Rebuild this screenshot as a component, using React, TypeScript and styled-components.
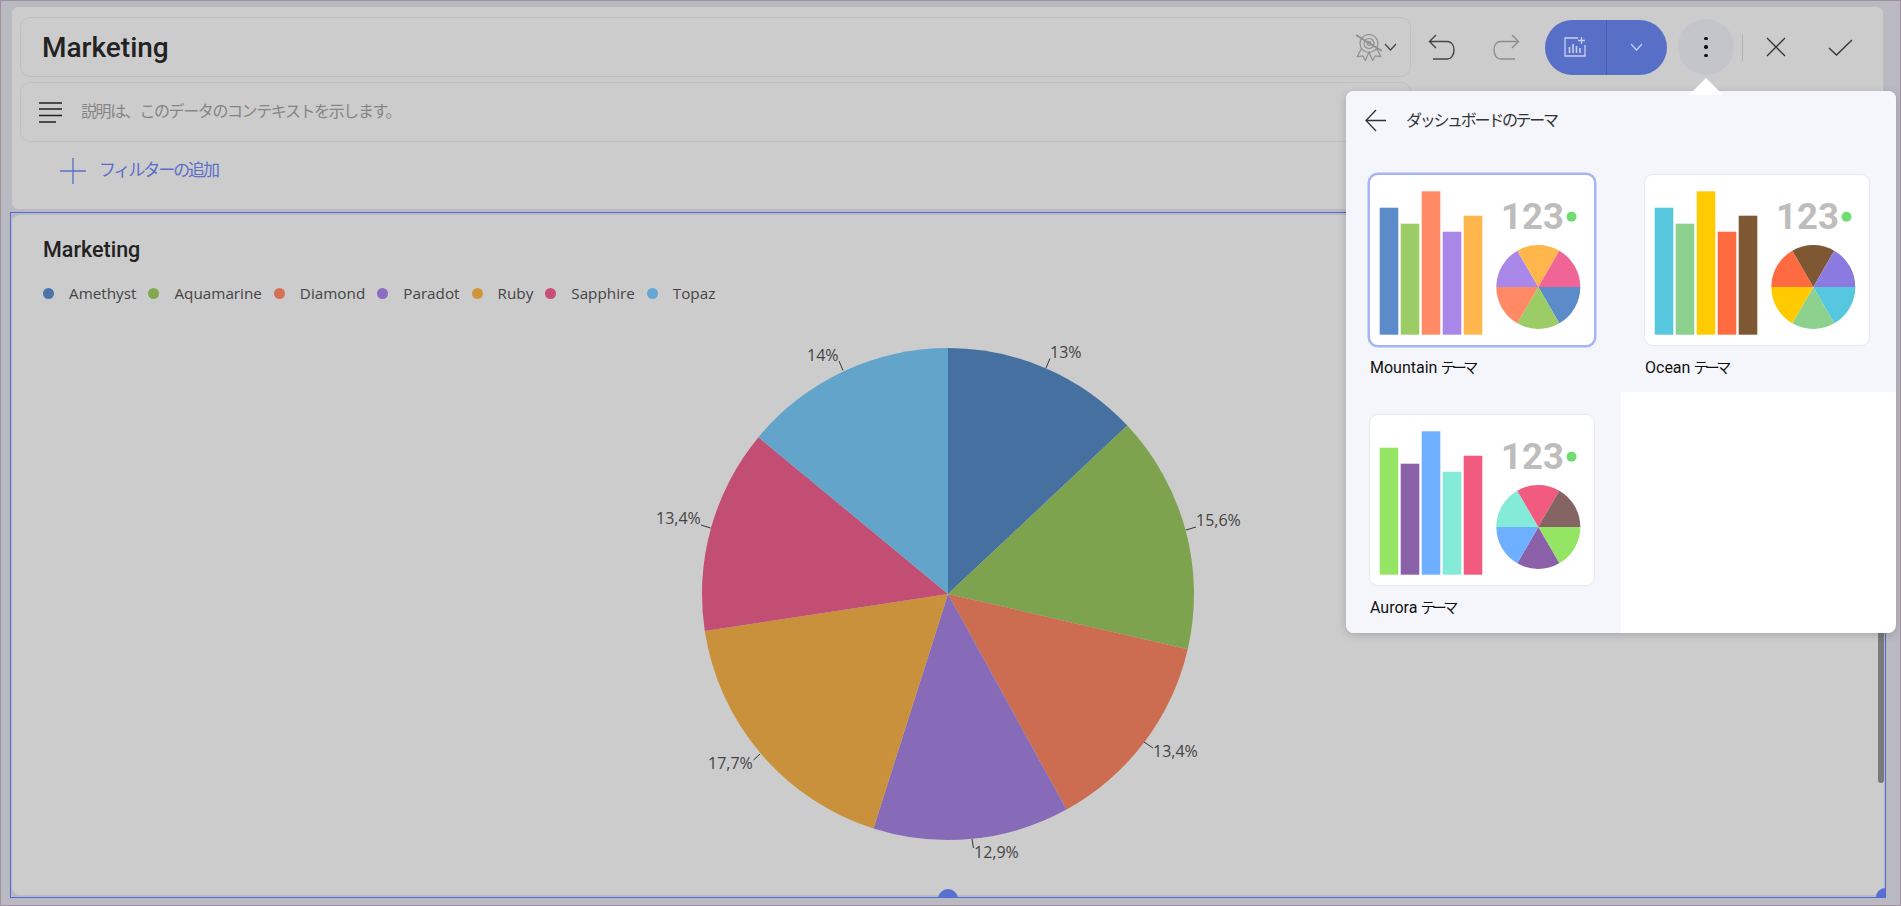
import React from "react";
import styled, { createGlobalStyle } from "styled-components";

const GlobalStyle = createGlobalStyle`
  html, body {
    margin: 0;
    padding: 0;
    background: #b9bac1;
    font-family: Roboto, "Noto Sans CJK JP", sans-serif;
  }
`;

const jpFont = `"Noto Sans CJK JP", Roboto, sans-serif`;

const Page = styled.div`
  position: relative;
  box-sizing: border-box;
  width: 1901px;
  height: 906px;
  overflow: hidden;
  border: 1px solid #a08f9f;
  background: #b9bac1;
  padding: 6px 14px 7px 9px;
`;

const HeaderPanel = styled.div`
  display: flex;
  box-sizing: border-box;
  height: 202px;
  margin: 0 3px 3px 2px;
  padding: 10px 0 0 8px;
  background: #cccccc;
  border-radius: 6px;
`;

const HeaderFields = styled.div`
  display: flex;
  flex-direction: column;
  gap: 5px;
  width: 1391px;
`;

const FieldBox = styled.div`
  display: flex;
  align-items: center;
  box-sizing: border-box;
  height: 60px;
  border: 1px solid #c0c0c0;
  border-radius: 10px;
`;

const TitleBox = styled(FieldBox)`
  padding: 0 13px 0 21px;
  justify-content: space-between;
`;

const TitleText = styled.div`
  font-size: 28px;
  font-weight: 500;
  color: #222222;
`;

const AwardGroup = styled.div`
  display: flex;
  align-items: center;
  gap: 2px;
`;

const DescriptionBox = styled(FieldBox)`
  padding-left: 18px;
  gap: 19px;
`;

const DescriptionText = styled.div`
  margin-bottom: 4px;
  font-family: ${jpFont};
  font-size: 16px;
  font-weight: 400;
  letter-spacing: -1.4px;
  color: #858585;
`;

const FilterRow = styled.div`
  display: flex;
  align-items: center;
  gap: 13px;
  margin-top: 9px;
  padding-left: 40px;
`;

const FilterText = styled.div`
  margin-bottom: 4px;
  font-family: ${jpFont};
  font-size: 17px;
  font-weight: 400;
  letter-spacing: -2.1px;
  color: #5b6fc9;
`;

const Toolbar = styled.div`
  display: flex;
  align-items: center;
  height: 56px;
  margin: 2px 0 0 3px;
`;

const IconButton = styled.div<{ $after?: number }>`
  display: flex;
  align-items: center;
  justify-content: center;
  flex: none;
  width: 56px;
  height: 56px;
  margin-right: ${(p) => p.$after ?? 8}px;
`;

const SplitButton = styled.div`
  display: flex;
  flex: none;
  box-sizing: border-box;
  width: 122px;
  height: 55px;
  margin-right: 11px;
  border-radius: 28px;
  background: #586fc7;
`;

const SplitPart = styled.div<{ $width: number }>`
  display: flex;
  align-items: center;
  justify-content: center;
  width: ${(p) => p.$width}px;
  & + & {
    border-left: 1px solid #4a5ea8;
  }
`;

const MoreButton = styled.div`
  display: flex;
  flex-direction: column;
  align-items: center;
  justify-content: center;
  gap: 5px;
  flex: none;
  width: 56px;
  height: 56px;
  margin-right: 8px;
  border-radius: 50%;
  background: #c4c5cb;
`;

const MoreDot = styled.span`
  width: 3.5px;
  height: 3.5px;
  border-radius: 50%;
  background: #111111;
`;

const ToolbarDivider = styled.div`
  flex: none;
  width: 1px;
  height: 27px;
  margin-right: 5px;
  background: #b4b4b4;
`;

const ChartFrame = styled.div`
  position: relative;
  box-sizing: border-box;
  height: 686px;
  padding: 2px 1px 2px 1px;
  border: 1px solid #5269d8;
`;

const ChartCard = styled.div`
  position: relative;
  box-sizing: border-box;
  height: 100%;
  padding: 23px 0 0 31px;
  background: #cccccc;
  border-radius: 8px;
  overflow: hidden;
`;

const ChartTitle = styled.div`
  font-size: 21.5px;
  line-height: 24px;
  font-weight: 500;
  color: #222222;
`;

const Legend = styled.div`
  display: flex;
  align-items: center;
  gap: 12px;
  height: 20px;
  margin-top: 21px;
`;

const LegendItem = styled.div`
  display: flex;
  align-items: center;
  gap: 15px;
  font-family: "Open Sans", sans-serif;
  font-size: 15.25px;
  color: #444444;
`;

const LegendDot = styled.span<{ $color: string }>`
  width: 11px;
  height: 11px;
  border-radius: 50%;
  background: ${(p) => p.$color};
`;

const ChartArea = styled.div`
  display: flex;
  justify-content: center;
  margin: 17px 0 0 -31px;
`;

const PieLabel = styled.text`
  font-family: "Open Sans", sans-serif;
  font-size: 16px;
  fill: #444444;
`;

const ScrollThumb = styled.div`
  position: absolute;
  right: 0;
  top: 300px;
  bottom: 112px;
  width: 6px;
  border-radius: 3px;
  background: #7a7a7a;
`;

const CenterHandle = styled.div`
  position: absolute;
  left: 50%;
  bottom: -2px;
  width: 20px;
  height: 10px;
  margin-left: -10px;
  border-radius: 10px 10px 0 0;
  background: #5870d0;
  clip-path: inset(0 0 2px 0);
`;

const CornerHandle = styled.div`
  position: absolute;
  right: 0;
  bottom: 0;
  width: 9px;
  height: 9px;
  border-top-left-radius: 9px;
  background: #5870d0;
`;

const Popup = styled.div`
  position: absolute;
  left: 1345px;
  top: 90px;
  width: 550px;
  height: 542px;
  background: #ffffff;
  border-radius: 8px;
  box-shadow: 0 2px 8px rgba(0, 0, 0, 0.18);
`;

const PopupArrow = styled.div`
  position: absolute;
  left: 343px;
  top: -13px;
  width: 0;
  height: 0;
  border-left: 17px solid transparent;
  border-right: 17px solid transparent;
  border-bottom: 17px solid #ffffff;
`;

const PopupHeader = styled.div`
  display: flex;
  align-items: center;
  gap: 20px;
  box-sizing: border-box;
  height: 60px;
  padding: 0 0 2px 19px;
  background: #f5f6fb;
  border-radius: 8px 8px 0 0;
`;

const PopupTitle = styled.div`
  margin-bottom: 3px;
  font-family: ${jpFont};
  font-size: 16px;
  font-weight: 400;
  letter-spacing: -2.3px;
  color: #333333;
`;

const ThemeGrid = styled.div`
  display: grid;
  grid-template-columns: 275px 275px;
  grid-template-rows: 241px 241px;
`;

const ThemeCell = styled.div`
  box-sizing: border-box;
  padding: 24px 0 0 24px;
  background: #f5f6fb;
  &:nth-child(3) {
    padding-top: 23px;
    border-bottom-left-radius: 8px;
  }
`;

const ThemeCard = styled.div<{ $selected?: boolean }>`
  box-sizing: border-box;
  width: 224px;
  height: 170px;
  margin-bottom: 13px;
  background: #ffffff;
  border-radius: 8px;
  overflow: hidden;
  box-shadow: ${(p) =>
    p.$selected ? "0 0 0 2.5px #a5b4f5" : "0 0 0 1px #e6e8ee"};
`;

const ThemeName = styled.div`
  display: flex;
  align-items: baseline;
  gap: 3px;
  font-size: 16px;
  line-height: 18px;
  color: #111111;
`;

const ThemeSuffix = styled.span`
  font-family: ${jpFont};
  font-size: 15px;
  letter-spacing: -3.6px;
`;

const ThumbNumber = styled.text`
  font-family: Roboto, sans-serif;
  font-size: 36.5px;
  font-weight: 700;
  fill: #bdbdbd;
`;

const legendItems = [
  { name: "Amethyst", color: "#4a74a8" },
  { name: "Aquamarine", color: "#83a84e" },
  { name: "Diamond", color: "#d27153" },
  { name: "Paradot", color: "#8c6cc0" },
  { name: "Ruby", color: "#d2963a" },
  { name: "Sapphire", color: "#c94f78" },
  { name: "Topaz", color: "#63a8d4" },
];

const pieSlices = [
  { value: 13, color: "#46709f" },
  { value: 15.6, color: "#7da34f" },
  { value: 13.4, color: "#cc6d51" },
  { value: 12.9, color: "#886bb8" },
  { value: 17.7, color: "#ca913c" },
  { value: 13.4, color: "#c24e74" },
  { value: 14, color: "#63a4cb" },
];

const pieLabels = [
  { text: "13%", x: 1050, y: 353, line: "M1046 368L1050 358.5" },
  { text: "15,6%", x: 1196, y: 521, line: "M1186 530L1196 527" },
  { text: "13,4%", x: 1153, y: 752, line: "M1144 742L1153 748" },
  { text: "12,9%", x: 974, y: 853, line: "M972 839L973.5 848" },
  { text: "17,7%", x: 708, y: 764, line: "M760 754L753.5 760" },
  { text: "13,4%", x: 656, y: 519, line: "M710.6 528L701 525" },
  { text: "14%", x: 807, y: 356, line: "M843 370.5L839 361" },
];

const themes = [
  {
    name: "Mountain",
    selected: true,
    colors: ["#5b8bc9", "#9ccc65", "#ff8a65", "#a987e8", "#ffb74d", "#f06595"],
  },
  {
    name: "Ocean",
    colors: ["#57c7e0", "#8dd18f", "#ffcb00", "#ff6b40", "#7e5733", "#8b7be0"],
  },
  {
    name: "Aurora",
    colors: ["#95e565", "#8a60a8", "#6eb0ff", "#85ebd9", "#f05b7f", "#856464"],
  },
];

const barTops = [32.7, 48.7, 16.3, 56.7, 40.7];

// angle is measured in degrees clockwise from the top of the circle
const slicePath = (cx: number, cy: number, r: number, from: number, to: number) => {
  const point = (deg: number) => {
    const rad = (deg * Math.PI) / 180;
    return `${cx + r * Math.sin(rad)} ${cy - r * Math.cos(rad)}`;
  };
  return `M${cx} ${cy}L${point(from)}A${r} ${r} 0 ${to - from > 180 ? 1 : 0} 1 ${point(to)}Z`;
};

const PieChart: React.FC = () => {
  let angle = 0;
  return (
    <svg width={640} height={550} viewBox="628 320 640 550">
      {pieSlices.map((slice) => {
        const from = angle;
        angle += (slice.value / 100) * 360;
        return (
          <path
            key={slice.color}
            d={slicePath(948, 594, 246, from, angle)}
            fill={slice.color}
          />
        );
      })}
      {pieLabels.map((label) => (
        <g key={label.line}>
          <path d={label.line} stroke="#333333" strokeWidth={1} fill="none" />
          <PieLabel x={label.x} y={label.y + 5}>
            {label.text}
          </PieLabel>
        </g>
      ))}
    </svg>
  );
};

const ThemeThumb: React.FC<{ colors: string[] }> = ({ colors }) => (
  <svg width={225} height={171} viewBox="0 0 225 171">
    {barTops.map((top, i) => (
      <rect
        key={top}
        x={9.7 + i * 21}
        y={top}
        width={18.6}
        height={159.7 - top}
        fill={colors[i]}
      />
    ))}
    <ThumbNumber x={131} y={54}>
      123
    </ThumbNumber>
    <circle cx={201.5} cy={41.7} r={5} fill="#6fdd73" />
    {/* slices run clockwise from the lower right */}
    {colors.map((color, i) => (
      <path
        key={color}
        d={slicePath(168.3, 112, 42, 90 + i * 60, 150 + i * 60)}
        fill={color}
      />
    ))}
  </svg>
);

const AwardIcon = () => (
  <svg width={26} height={27} viewBox="0 0 26 27" fill="none" stroke="#8f8f8f" strokeWidth={1.2}>
    <circle cx={13} cy={9.5} r={9} />
    <circle cx={13} cy={9.5} r={5} />
    <circle cx={13} cy={9.5} r={1.8} />
    <path d="M5.7 14L1.3 22.5L6.7 21.8L9.3 26.5L13 18.2L16.7 26.5L19.3 21.8L24.7 22.5L20.3 14" />
    <path d="M0 1L26 17" strokeWidth={1.5} />
  </svg>
);

const SmallChevron: React.FC<{ color: string; width?: number }> = ({ color, width = 13 }) => (
  <svg width={width} height={8} viewBox="0 0 13 8" fill="none" stroke={color} strokeWidth={1.2}>
    <path d="M1 1L6.5 7L12 1" />
  </svg>
);

const HamburgerIcon = () => (
  <svg width={23} height={21} viewBox="0 0 23 21" fill="none" stroke="#222222" strokeWidth={1.3}>
    <path d="M0 1H23M0 7H23M0 13.5H23M0 20H17" />
  </svg>
);

const PlusIcon = () => (
  <svg width={26} height={26} viewBox="0 0 26 26" fill="none" stroke="#5b6fc9" strokeWidth={1.3}>
    <path d="M13 0V26M0 13H26" />
  </svg>
);

const UndoIcon: React.FC<{ mirrored?: boolean; color: string }> = ({ mirrored, color }) => (
  <svg
    width={28}
    height={28}
    viewBox="0 0 28 28"
    fill="none"
    stroke={color}
    strokeWidth={1.4}
    transform={mirrored ? "scale(-1 1)" : undefined}
  >
    <path d="M8 2L1.5 8.5L8 15M1.5 8.5H19C23 8.5 26 11.5 26 17C26 22.5 23 26 19 26H5" />
  </svg>
);

const ChartAddIcon = () => (
  <svg width={22} height={20} viewBox="0 0 22 20" fill="none" stroke="#c9cfeb" strokeWidth={1.3}>
    <path d="M14 1H1V19H21V8" />
    <path d="M17.5 0V7M14 3.5H21" />
    <path d="M5.5 16V10M9 16V7M12.5 16V9M16 16V11" strokeWidth={1.6} />
  </svg>
);

const CloseIcon = () => (
  <svg width={20} height={20} viewBox="0 0 20 20" fill="none" stroke="#333333" strokeWidth={1.3}>
    <path d="M1 1L19 19M19 1L1 19" />
  </svg>
);

const CheckIcon = () => (
  <svg width={25} height={17} viewBox="0 0 25 17" fill="none" stroke="#333333" strokeWidth={1.3}>
    <path d="M1 9L8.5 16L24 1" />
  </svg>
);

const BackIcon = () => (
  <svg width={21} height={23} viewBox="0 0 21 23" fill="none" stroke="#333333" strokeWidth={1.3}>
    <path d="M11 1L1 11.5L11 22M1 11.5H21" />
  </svg>
);

const App: React.FC = () => (
  <Page>
    <GlobalStyle />
    <HeaderPanel>
      <HeaderFields>
        <TitleBox>
          <TitleText>Marketing</TitleText>
          <AwardGroup>
            <AwardIcon />
            <SmallChevron color="#444444" />
          </AwardGroup>
        </TitleBox>
        <DescriptionBox>
          <HamburgerIcon />
          <DescriptionText>説明は、このデータのコンテキストを示します。</DescriptionText>
        </DescriptionBox>
        <FilterRow>
          <PlusIcon />
          <FilterText>フィルターの追加</FilterText>
        </FilterRow>
      </HeaderFields>
      <Toolbar>
        <IconButton>
          <UndoIcon color="#444444" />
        </IconButton>
        <IconButton $after={11}>
          <UndoIcon mirrored color="#8c8c8c" />
        </IconButton>
        <SplitButton>
          <SplitPart $width={61}>
            <ChartAddIcon />
          </SplitPart>
          <SplitPart $width={61}>
            <SmallChevron color="#c9cfeb" />
          </SplitPart>
        </SplitButton>
        <MoreButton>
          <MoreDot />
          <MoreDot />
          <MoreDot />
        </MoreButton>
        <ToolbarDivider />
        <IconButton>
          <CloseIcon />
        </IconButton>
        <IconButton>
          <CheckIcon />
        </IconButton>
      </Toolbar>
    </HeaderPanel>

    <ChartFrame>
      <ChartCard>
        <ChartTitle>Marketing</ChartTitle>
        <Legend>
          {legendItems.map((item) => (
            <LegendItem key={item.name}>
              <LegendDot $color={item.color} />
              {item.name}
            </LegendItem>
          ))}
        </Legend>
        <ChartArea>
          <PieChart />
        </ChartArea>
        <ScrollThumb />
      </ChartCard>
      <CenterHandle />
      <CornerHandle />
    </ChartFrame>

    <Popup>
      <PopupArrow />
      <PopupHeader>
        <BackIcon />
        <PopupTitle>ダッシュボードのテーマ</PopupTitle>
      </PopupHeader>
      <ThemeGrid>
        {themes.map((theme) => (
          <ThemeCell key={theme.name}>
            <ThemeCard $selected={theme.selected}>
              <ThemeThumb colors={theme.colors} />
            </ThemeCard>
            <ThemeName>
              {theme.name}
              <ThemeSuffix>テーマ</ThemeSuffix>
            </ThemeName>
          </ThemeCell>
        ))}
      </ThemeGrid>
    </Popup>
  </Page>
);

export default App;
